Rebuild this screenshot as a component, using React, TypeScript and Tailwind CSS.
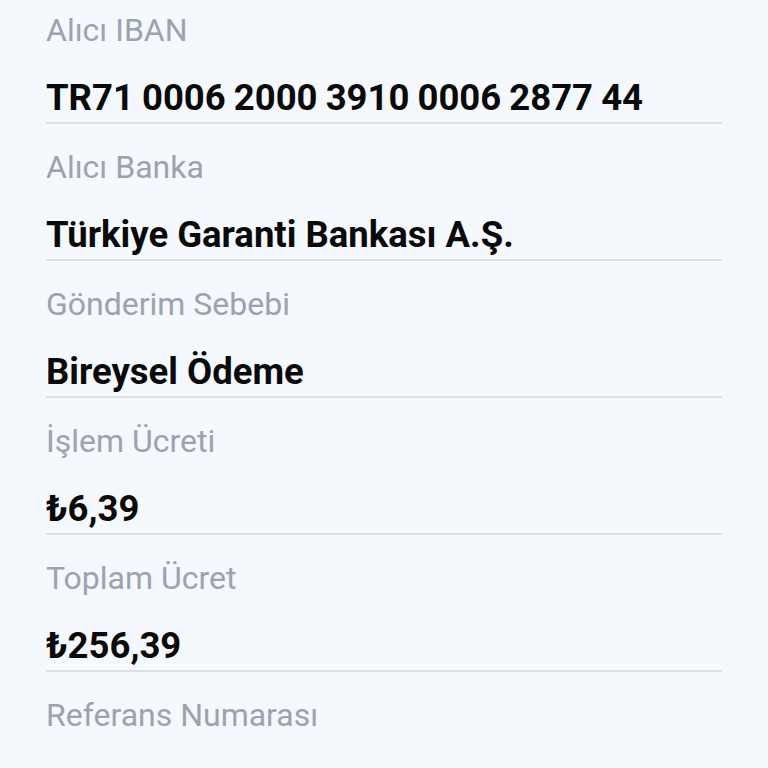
import React from "react";

type Row = { label: string; value?: string; tight?: boolean };

const rows: Row[] = [
  { label: "Alıcı IBAN", value: "TR71 0006 2000 3910 0006 2877 44", tight: true },
  { label: "Alıcı Banka", value: "Türkiye Garanti Bankası A.Ş." },
  { label: "Gönderim Sebebi", value: "Bireysel Ödeme" },
  { label: "İşlem Ücreti", value: "₺6,39" },
  { label: "Toplam Ücret", value: "₺256,39" },
  { label: "Referans Numarası" },
];

export default function App() {
  return (
    <div
      className="w-[768px] h-[768px] overflow-hidden bg-[#f5f8fc] px-[46px] pt-[10px]"
      style={{ fontFamily: "Roboto, 'Noto Sans', sans-serif" }}
    >
      <div className="flex flex-col gap-[23px]">
        {rows.map((r) => (
          <div key={r.label} className="flex flex-col">
            <div className="text-[32px] leading-[40px] text-[#9ca3af]">{r.label}</div>
            {r.value && (
              <>
                <div
                  className={
                    r.tight
                      ? "mt-[26px] text-[36.5px] leading-[44px] font-bold text-[#0a0a0a] [word-spacing:-1px]"
                      : "mt-[26px] text-[36.5px] leading-[44px] font-bold text-[#0a0a0a]"
                  }
                >
                  {r.value}
                </div>
                <div className="mt-[2px] h-[2px] bg-[#dcdfe4]" />
              </>
            )}
          </div>
        ))}
      </div>
    </div>
  );
}
